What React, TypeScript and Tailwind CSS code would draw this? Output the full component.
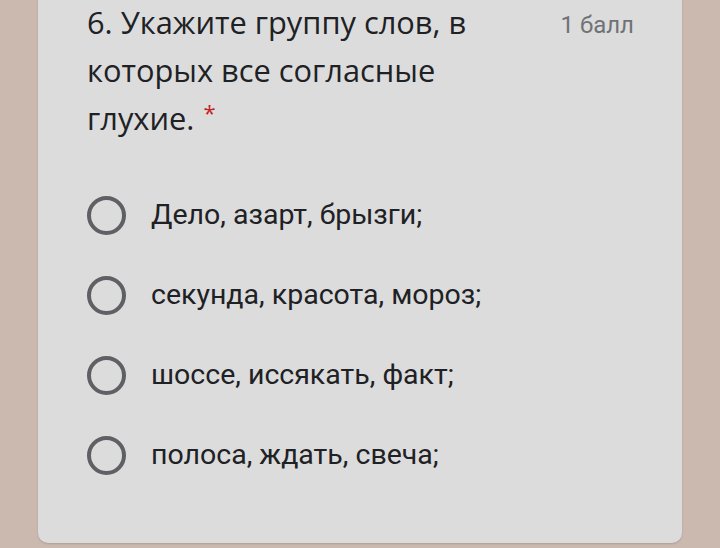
const OPTIONS = [
  'Дело, азарт, брызги;',
  'секунда, красота, мороз;',
  'шоссе, иссякать, факт;',
  'полоса, ждать, свеча;',
];

export default function App() {
  return (
    <div className="h-[548px] w-[720px] overflow-hidden bg-[#cbb9b0]">
      <div className="mx-[38px] -mt-[20px] h-[563px] rounded-b-[10px] bg-[#dcdcdc] pl-[49px] pr-[48px] pt-[20px] shadow-[0_1px_2px_rgba(0,0,0,0.15)]">
        <div className="flex items-start justify-between">
          <h1 className="w-[430px] font-['Open_Sans',sans-serif] text-[30.8px] leading-[48px] text-[#202124] -mt-[2px]">
            <span>6. Укажите группу слов, в которых все согласные глухие.</span>
            <span className="ml-[9px] inline-block align-top pt-[7px] text-[22px] leading-[22px] text-[#c5221f]">*</span>
          </h1>
          <span className="mt-[10px] font-['Roboto',sans-serif] text-[24px] leading-[30px] text-[#6f7276]">1 балл</span>
        </div>
        <div className="mt-[54px] flex flex-col gap-[41px]">
          {OPTIONS.map((o) => (
            <label key={o} className="flex h-[39px] items-center">
              <span className="h-[39px] w-[39px] shrink-0 rounded-full border-[4px] border-[#5f6064]" />
              <span className="ml-[25px] font-['Roboto',sans-serif] text-[28.5px] text-[#202124]">{o}</span>
            </label>
          ))}
        </div>
      </div>
    </div>
  );
}
